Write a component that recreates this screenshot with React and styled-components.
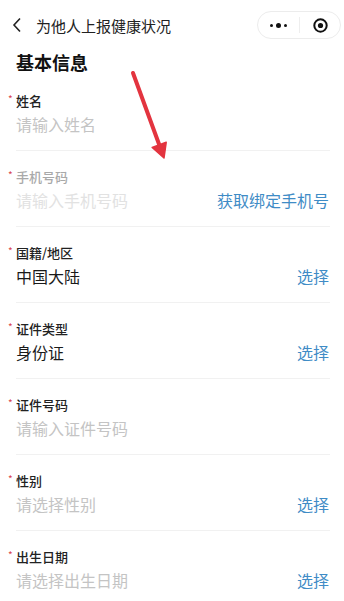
import React from 'react'
import styled, { createGlobalStyle } from 'styled-components'

const Global = createGlobalStyle`
  html, body { margin:0; padding:0; background:#fff; }
  body { font-family: "Noto Sans CJK SC", "Noto Sans", sans-serif; color:#1f1f1f; }
`

const fields = [
  { label: '姓名', placeholder: '请输入姓名' },
  { label: '手机号码', placeholder: '请输入手机号码', action: '获取绑定手机号', disabled: true },
  { label: '国籍/地区', value: '中国大陆', action: '选择' },
  { label: '证件类型', value: '身份证', action: '选择' },
  { label: '证件号码', placeholder: '请输入证件号码' },
  { label: '性别', placeholder: '请选择性别', action: '选择' },
  { label: '出生日期', placeholder: '请选择出生日期', action: '选择' },
]

export default function App() {
  return (
    <>
      <Global />
      <Page>
        <NavBar>
          <Back>
            <svg width="10" height="16" viewBox="0 0 10 16">
              <path d="M8 1.5 L2 8 L8 14.5" fill="none" stroke="#222" strokeWidth="1.6" />
            </svg>
          </Back>
          <NavTitle>为他人上报健康状况</NavTitle>
          <Capsule>
            <Dots>
              <Dot size={3} />
              <Dot size={5} />
              <Dot size={3} />
            </Dots>
            <CapLine />
            <Target>
              <svg width="15" height="15" viewBox="0 0 15 15">
                <circle cx="7.5" cy="7.5" r="6.2" fill="none" stroke="#111" strokeWidth="2" />
                <circle cx="7.5" cy="7.5" r="2.6" fill="#111" />
              </svg>
            </Target>
          </Capsule>
        </NavBar>
        <Heading>基本信息</Heading>
        <Form>
          {fields.map((f) => (
            <Field key={f.label}>
              <Label disabled={f.disabled}>
                <Star>*</Star>
                {f.label}
              </Label>
              <ValueLine>
                {f.value ? (
                  <Value>{f.value}</Value>
                ) : (
                  <Placeholder disabled={f.disabled}>{f.placeholder}</Placeholder>
                )}
                {f.action && <Action>{f.action}</Action>}
              </ValueLine>
            </Field>
          ))}
        </Form>
        <Arrow width="344" height="170" viewBox="0 0 344 170">
          <line x1="133" y1="73" x2="159.5" y2="145.5" stroke="#e3343f" strokeWidth="4" strokeLinecap="round" />
          <polygon points="164,158 166.2,142.3 152.2,147.5" fill="#e3343f" stroke="#e3343f" strokeWidth="1.5" strokeLinejoin="round" />
        </Arrow>
      </Page>
    </>
  )
}

const Page = styled.div`
  position:relative;
  width:344px;
  min-height:601px;
  overflow:hidden;
  background:#fff;
`
const NavBar = styled.div`
  height:50px;
  display:flex;
  align-items:center;
  padding:0 3px 0 12px;
  box-sizing:border-box;
`
const Back = styled.div`
  width:24px;
  display:flex;
  align-items:center;
  svg{ display:block; }
`
const NavTitle = styled.div`
  flex:1;
  font-size:15px;
  color:#222;
`
const Capsule = styled.div`
  width:84px;
  height:28px;
  box-sizing:border-box;
  border:1px solid #ececec;
  border-radius:14px;
  display:flex;
  align-items:center;
`
const Dots = styled.div`
  width:41px;
  display:flex;
  align-items:center;
  justify-content:center;
  gap:3px;
`
const Dot = styled.span`
  width:${p => p.size}px;
  height:${p => p.size}px;
  border-radius:50%;
  background:#111;
`
const CapLine = styled.div`
  width:1px;
  height:16px;
  background:#eeeeee;
`
const Target = styled.div`
  flex:1;
  display:flex;
  justify-content:center;
  align-items:center;
  svg{ display:block; }
`
const Heading = styled.div`
  padding-left:16px;
  height:24px;
  line-height:24px;
  font-size:18px;
  font-weight:700;
  color:#111;
`
const Form = styled.div`
  display:flex;
  flex-direction:column;
`
const Field = styled.div`
  margin:0 14px 0 16px;
  padding:18px 0 14px;
  border-bottom:1px solid #f1f1f1;
  display:flex;
  flex-direction:column;
  gap:2px;
  & + &{ padding-top:17px; }
`
const Label = styled.div`
  position:relative;
  font-size:13px;
  line-height:18px;
  font-weight:500;
  color:${p => (p.disabled ? '#a9a9a9' : '#222')};
`
const Star = styled.span`
  position:absolute;
  left:-8px;
  top:-2px;
  font-size:10px;
  font-weight:400;
  color:#d9454f;
`
const ValueLine = styled.div`
  display:flex;
  justify-content:space-between;
  align-items:center;
  height:24px;
  font-size:16px;
`
const Value = styled.span`
  color:#1a1a1a;
`
const Placeholder = styled.span`
  color:${p => (p.disabled ? '#e2e2e2' : '#c4c4c4')};
`
const Action = styled.span`
  color:#3f8cc6;
  margin-right:1px;
`
const Arrow = styled.svg`
  position:absolute;
  left:0;
  top:0;
  pointer-events:none;
`
